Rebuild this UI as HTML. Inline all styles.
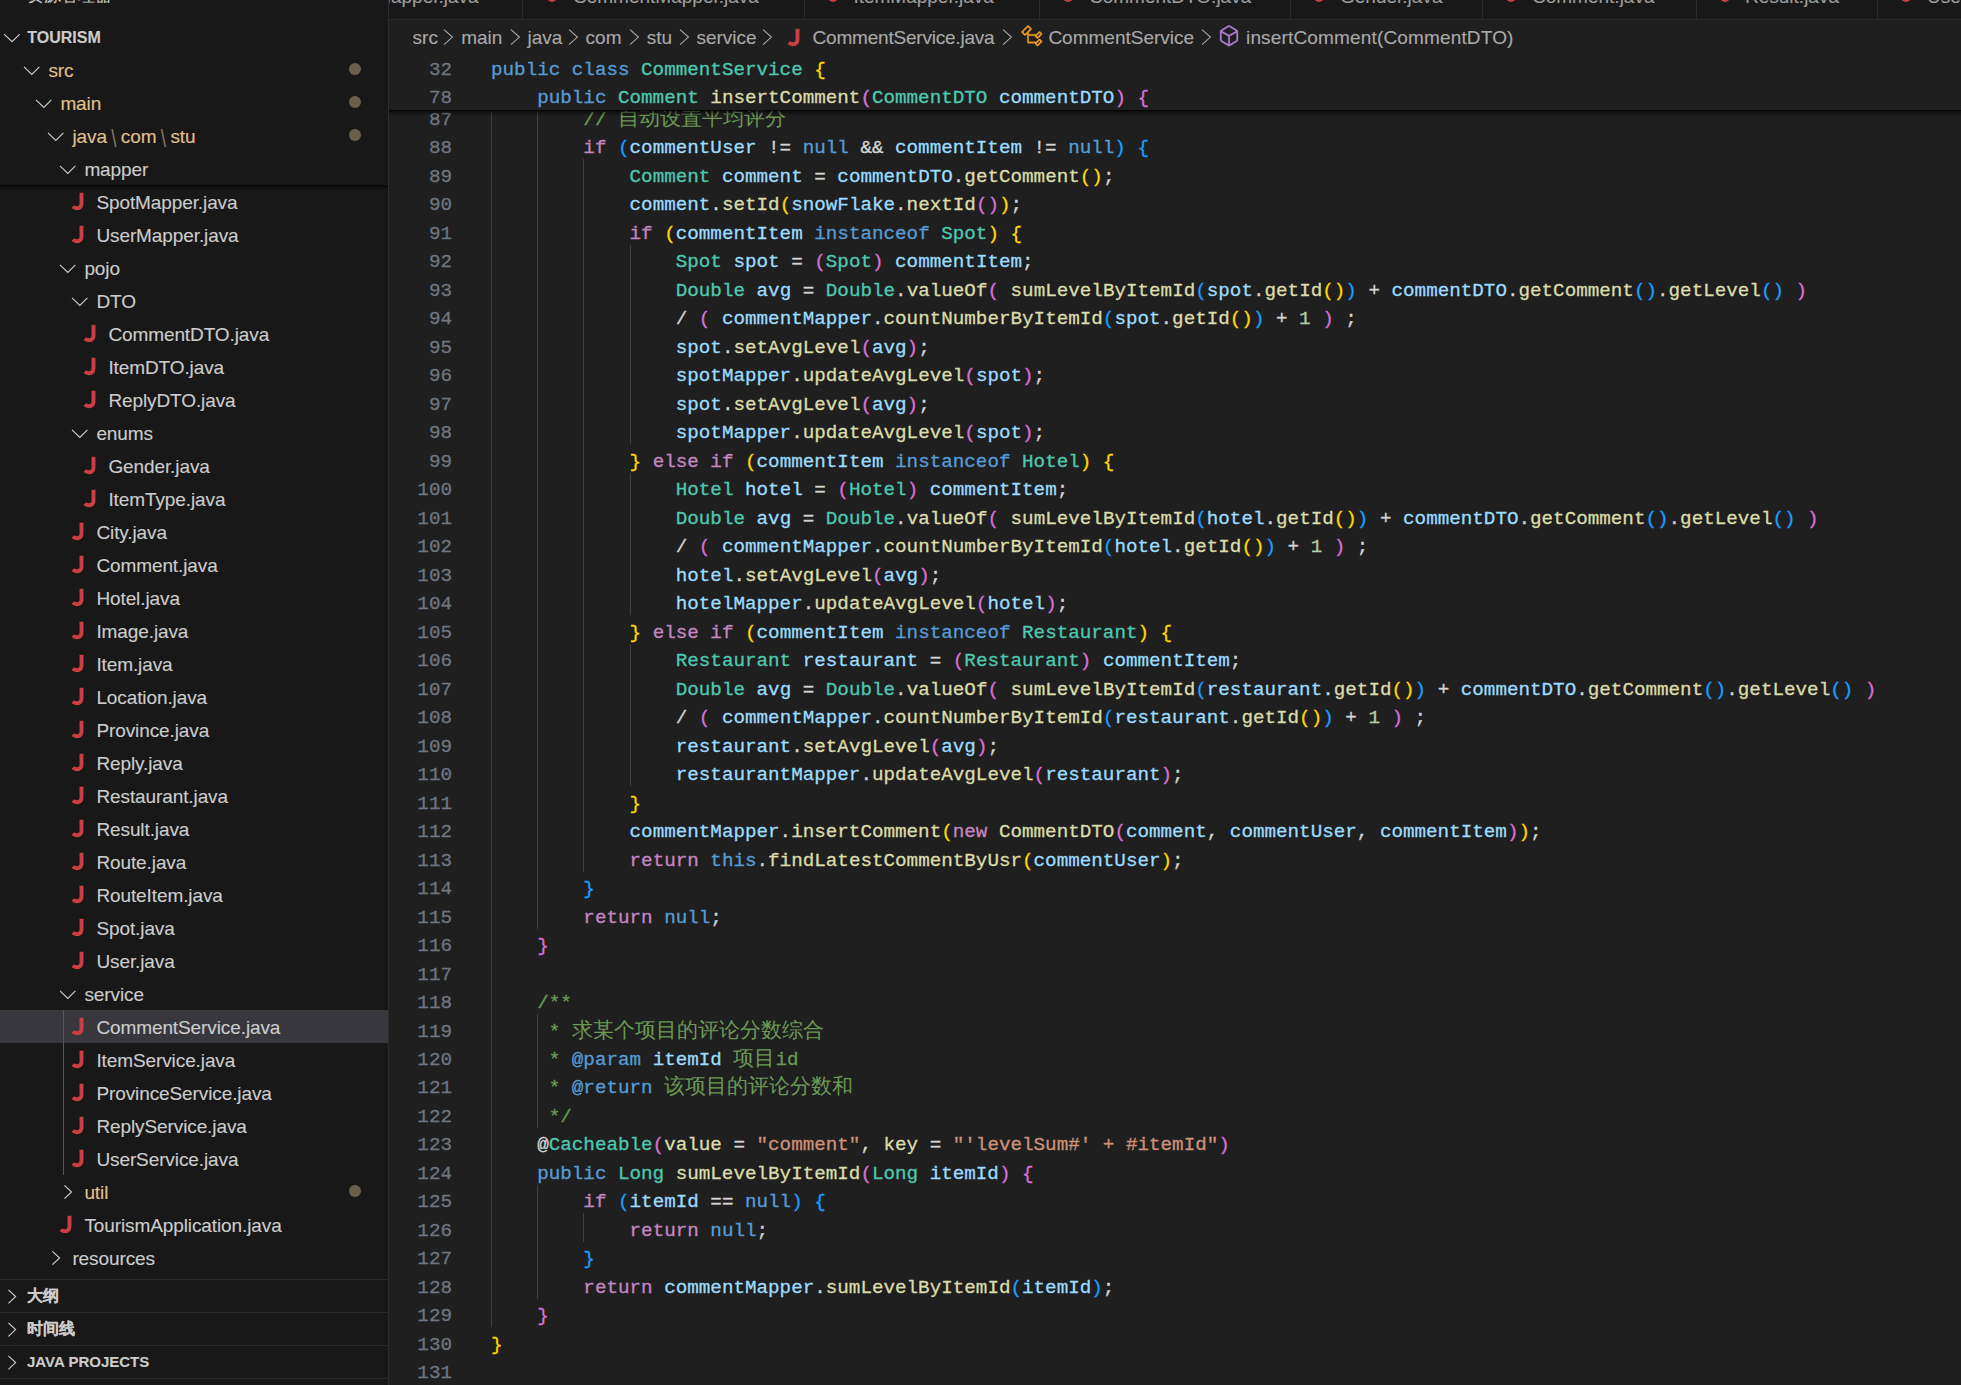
<!DOCTYPE html>
<html><head><meta charset="utf-8">
<style>
*{margin:0;padding:0;box-sizing:border-box}
html,body{width:1961px;height:1385px;overflow:hidden;background:#1f1f1f}
body{position:relative;font-family:"Liberation Sans",sans-serif;-webkit-text-stroke:0.12px currentColor}
#side{position:absolute;left:0;top:0;width:388px;height:1385px;background:#181818;overflow:hidden}
#sideborder{position:absolute;left:388px;top:0;width:1px;height:1385px;background:#2b2b2b}
#editor{position:absolute;left:389px;top:0;width:1572px;height:1385px;background:#1f1f1f;overflow:hidden}
.row{position:absolute;left:0;width:388px;height:33px}
.row.sel{background:#37373d}
.chv{position:absolute;top:0}
.jw{position:absolute;top:7px;width:14px;height:20px}
.ji{display:block}
.lb{position:absolute;top:0;height:33px;line-height:35px;font-size:19px;white-space:nowrap;color:#ccc;letter-spacing:-0.1px}
.bs{color:#857760;padding:0 4.4px;display:inline-block;transform:scaleY(1.3) translateY(1.5px);-webkit-text-stroke:0}
.dot{position:absolute;left:349px;top:10.2px;width:12px;height:12px;border-radius:50%;background:#6a5f4a}
#sidetitle{position:absolute;left:27px;top:-15px;font-size:16.5px;line-height:20px;color:#cccccc;white-space:nowrap}
#tourism{position:absolute;left:0;top:20px;width:388px;height:33px}
#tourism .lb{left:27.3px;font-weight:bold;font-size:16px;color:#ccc;letter-spacing:0}
#stickyside{position:absolute;left:0;top:0;width:388px;height:185px;background:#181818}
#stickyshadow{position:absolute;left:0;top:185px;width:388px;height:6px;background:linear-gradient(rgba(0,0,0,0.75) 0%,rgba(0,0,0,0.3) 35%,rgba(0,0,0,0) 100%)}
.sec{position:absolute;left:0;width:388px;height:33px;border-top:1px solid #2b2b2b;background:#181818}
.sec .lb{left:27px;font-weight:bold;font-size:16px;color:#ccc;height:32px;line-height:32px}
.sguide{position:absolute;left:63px;width:1px;background:#585858}

#tabs{position:absolute;left:0;top:0;width:1572px;height:20px;background:#181818;border-bottom:1px solid #2b2b2b}
.tsep{position:absolute;top:0;width:1px;height:19px;background:#2b2b2b}
.tabt{position:absolute;top:-20.5px;height:33px;line-height:33px;font-size:19px;color:#9d9d9d;white-space:nowrap}
.tabdot{position:absolute;top:-8.4px;width:10px;height:10px;border-radius:50%;background:#CC3E44}
.cj{font-size:20.6px;-webkit-text-stroke:0}
#crumbs{position:absolute;left:0;top:20px;width:1572px;height:33px;font-size:19px;color:#a9a9a9;white-space:nowrap}
.cr{position:absolute;top:0;height:33px;line-height:35px}
.crs{position:absolute;top:0}

.ln{position:absolute;left:0;width:63px;text-align:right;height:28.5px;line-height:28.5px;font-family:"Liberation Mono",monospace;font-size:19.243px;color:#6e7681;margin-top:3.5px}
.cl{position:absolute;height:28.5px;line-height:28.5px;font-family:"Liberation Mono",monospace;font-size:19.243px;color:#d4d4d4;white-space:pre;margin-top:3.5px}
.ig{position:absolute;width:1px;background:#404040}
.cl,.ln{-webkit-text-stroke:0.3px currentColor}
.k{color:#C586C0}.s{color:#569CD6}.t{color:#4EC9B0}.v{color:#9CDCFE}.f{color:#DCDCAA}.c{color:#6A9955}.q{color:#CE9178}.n{color:#B5CEA8}
.c1{color:#FFD700}.c2{color:#DA70D6}.c3{color:#179FFF}
#code{position:absolute;left:0;top:0;width:1572px;height:1385px}
#sticky{position:absolute;left:0;top:52.5px;width:1572px;height:57px;background:#1f1f1f}
#stickyin{position:absolute;left:0;top:-52.5px;width:1572px;height:110px}
#stickysh{position:absolute;left:0;top:109.5px;width:1572px;height:6px;background:linear-gradient(#000 0%,rgba(0,0,0,0.45) 30%,rgba(0,0,0,0) 100%)}
</style></head><body>
<div id="side">
  <div class="row" style="top:185px"><div class="jw" style="left:70.7px"><svg class="ji" width="14" height="20" viewBox="0 0 14 20"><path d="M10.5 0.85 L10.5 11.5 Q10.5 16.2 6 16.2 Q3.5 16.2 1.8 14.6" fill="none" stroke="#CC3E44" stroke-width="3.9" stroke-linecap="butt"/></svg></div><div class="lb" style="left:96.4px;color:#CCCCCC">SpotMapper.java</div></div><div class="row" style="top:218px"><div class="jw" style="left:70.7px"><svg class="ji" width="14" height="20" viewBox="0 0 14 20"><path d="M10.5 0.85 L10.5 11.5 Q10.5 16.2 6 16.2 Q3.5 16.2 1.8 14.6" fill="none" stroke="#CC3E44" stroke-width="3.9" stroke-linecap="butt"/></svg></div><div class="lb" style="left:96.4px;color:#CCCCCC">UserMapper.java</div></div><div class="row" style="top:251px"><svg class="chv" style="left:59.0px" width="18" height="33" viewBox="0 0 18 33"><path d="M1 13.8 L8.8 21.4 L16.4 13.8" fill="none" stroke="#CCCCCC" stroke-width="1.15"/></svg><div class="lb" style="left:84.4px;color:#CCCCCC">pojo</div></div><div class="row" style="top:284px"><svg class="chv" style="left:71.0px" width="18" height="33" viewBox="0 0 18 33"><path d="M1 13.8 L8.8 21.4 L16.4 13.8" fill="none" stroke="#CCCCCC" stroke-width="1.15"/></svg><div class="lb" style="left:96.4px;color:#CCCCCC">DTO</div></div><div class="row" style="top:317px"><div class="jw" style="left:82.7px"><svg class="ji" width="14" height="20" viewBox="0 0 14 20"><path d="M10.5 0.85 L10.5 11.5 Q10.5 16.2 6 16.2 Q3.5 16.2 1.8 14.6" fill="none" stroke="#CC3E44" stroke-width="3.9" stroke-linecap="butt"/></svg></div><div class="lb" style="left:108.4px;color:#CCCCCC">CommentDTO.java</div></div><div class="row" style="top:350px"><div class="jw" style="left:82.7px"><svg class="ji" width="14" height="20" viewBox="0 0 14 20"><path d="M10.5 0.85 L10.5 11.5 Q10.5 16.2 6 16.2 Q3.5 16.2 1.8 14.6" fill="none" stroke="#CC3E44" stroke-width="3.9" stroke-linecap="butt"/></svg></div><div class="lb" style="left:108.4px;color:#CCCCCC">ItemDTO.java</div></div><div class="row" style="top:383px"><div class="jw" style="left:82.7px"><svg class="ji" width="14" height="20" viewBox="0 0 14 20"><path d="M10.5 0.85 L10.5 11.5 Q10.5 16.2 6 16.2 Q3.5 16.2 1.8 14.6" fill="none" stroke="#CC3E44" stroke-width="3.9" stroke-linecap="butt"/></svg></div><div class="lb" style="left:108.4px;color:#CCCCCC">ReplyDTO.java</div></div><div class="row" style="top:416px"><svg class="chv" style="left:71.0px" width="18" height="33" viewBox="0 0 18 33"><path d="M1 13.8 L8.8 21.4 L16.4 13.8" fill="none" stroke="#CCCCCC" stroke-width="1.15"/></svg><div class="lb" style="left:96.4px;color:#CCCCCC">enums</div></div><div class="row" style="top:449px"><div class="jw" style="left:82.7px"><svg class="ji" width="14" height="20" viewBox="0 0 14 20"><path d="M10.5 0.85 L10.5 11.5 Q10.5 16.2 6 16.2 Q3.5 16.2 1.8 14.6" fill="none" stroke="#CC3E44" stroke-width="3.9" stroke-linecap="butt"/></svg></div><div class="lb" style="left:108.4px;color:#CCCCCC">Gender.java</div></div><div class="row" style="top:482px"><div class="jw" style="left:82.7px"><svg class="ji" width="14" height="20" viewBox="0 0 14 20"><path d="M10.5 0.85 L10.5 11.5 Q10.5 16.2 6 16.2 Q3.5 16.2 1.8 14.6" fill="none" stroke="#CC3E44" stroke-width="3.9" stroke-linecap="butt"/></svg></div><div class="lb" style="left:108.4px;color:#CCCCCC">ItemType.java</div></div><div class="row" style="top:515px"><div class="jw" style="left:70.7px"><svg class="ji" width="14" height="20" viewBox="0 0 14 20"><path d="M10.5 0.85 L10.5 11.5 Q10.5 16.2 6 16.2 Q3.5 16.2 1.8 14.6" fill="none" stroke="#CC3E44" stroke-width="3.9" stroke-linecap="butt"/></svg></div><div class="lb" style="left:96.4px;color:#CCCCCC">City.java</div></div><div class="row" style="top:548px"><div class="jw" style="left:70.7px"><svg class="ji" width="14" height="20" viewBox="0 0 14 20"><path d="M10.5 0.85 L10.5 11.5 Q10.5 16.2 6 16.2 Q3.5 16.2 1.8 14.6" fill="none" stroke="#CC3E44" stroke-width="3.9" stroke-linecap="butt"/></svg></div><div class="lb" style="left:96.4px;color:#CCCCCC">Comment.java</div></div><div class="row" style="top:581px"><div class="jw" style="left:70.7px"><svg class="ji" width="14" height="20" viewBox="0 0 14 20"><path d="M10.5 0.85 L10.5 11.5 Q10.5 16.2 6 16.2 Q3.5 16.2 1.8 14.6" fill="none" stroke="#CC3E44" stroke-width="3.9" stroke-linecap="butt"/></svg></div><div class="lb" style="left:96.4px;color:#CCCCCC">Hotel.java</div></div><div class="row" style="top:614px"><div class="jw" style="left:70.7px"><svg class="ji" width="14" height="20" viewBox="0 0 14 20"><path d="M10.5 0.85 L10.5 11.5 Q10.5 16.2 6 16.2 Q3.5 16.2 1.8 14.6" fill="none" stroke="#CC3E44" stroke-width="3.9" stroke-linecap="butt"/></svg></div><div class="lb" style="left:96.4px;color:#CCCCCC">Image.java</div></div><div class="row" style="top:647px"><div class="jw" style="left:70.7px"><svg class="ji" width="14" height="20" viewBox="0 0 14 20"><path d="M10.5 0.85 L10.5 11.5 Q10.5 16.2 6 16.2 Q3.5 16.2 1.8 14.6" fill="none" stroke="#CC3E44" stroke-width="3.9" stroke-linecap="butt"/></svg></div><div class="lb" style="left:96.4px;color:#CCCCCC">Item.java</div></div><div class="row" style="top:680px"><div class="jw" style="left:70.7px"><svg class="ji" width="14" height="20" viewBox="0 0 14 20"><path d="M10.5 0.85 L10.5 11.5 Q10.5 16.2 6 16.2 Q3.5 16.2 1.8 14.6" fill="none" stroke="#CC3E44" stroke-width="3.9" stroke-linecap="butt"/></svg></div><div class="lb" style="left:96.4px;color:#CCCCCC">Location.java</div></div><div class="row" style="top:713px"><div class="jw" style="left:70.7px"><svg class="ji" width="14" height="20" viewBox="0 0 14 20"><path d="M10.5 0.85 L10.5 11.5 Q10.5 16.2 6 16.2 Q3.5 16.2 1.8 14.6" fill="none" stroke="#CC3E44" stroke-width="3.9" stroke-linecap="butt"/></svg></div><div class="lb" style="left:96.4px;color:#CCCCCC">Province.java</div></div><div class="row" style="top:746px"><div class="jw" style="left:70.7px"><svg class="ji" width="14" height="20" viewBox="0 0 14 20"><path d="M10.5 0.85 L10.5 11.5 Q10.5 16.2 6 16.2 Q3.5 16.2 1.8 14.6" fill="none" stroke="#CC3E44" stroke-width="3.9" stroke-linecap="butt"/></svg></div><div class="lb" style="left:96.4px;color:#CCCCCC">Reply.java</div></div><div class="row" style="top:779px"><div class="jw" style="left:70.7px"><svg class="ji" width="14" height="20" viewBox="0 0 14 20"><path d="M10.5 0.85 L10.5 11.5 Q10.5 16.2 6 16.2 Q3.5 16.2 1.8 14.6" fill="none" stroke="#CC3E44" stroke-width="3.9" stroke-linecap="butt"/></svg></div><div class="lb" style="left:96.4px;color:#CCCCCC">Restaurant.java</div></div><div class="row" style="top:812px"><div class="jw" style="left:70.7px"><svg class="ji" width="14" height="20" viewBox="0 0 14 20"><path d="M10.5 0.85 L10.5 11.5 Q10.5 16.2 6 16.2 Q3.5 16.2 1.8 14.6" fill="none" stroke="#CC3E44" stroke-width="3.9" stroke-linecap="butt"/></svg></div><div class="lb" style="left:96.4px;color:#CCCCCC">Result.java</div></div><div class="row" style="top:845px"><div class="jw" style="left:70.7px"><svg class="ji" width="14" height="20" viewBox="0 0 14 20"><path d="M10.5 0.85 L10.5 11.5 Q10.5 16.2 6 16.2 Q3.5 16.2 1.8 14.6" fill="none" stroke="#CC3E44" stroke-width="3.9" stroke-linecap="butt"/></svg></div><div class="lb" style="left:96.4px;color:#CCCCCC">Route.java</div></div><div class="row" style="top:878px"><div class="jw" style="left:70.7px"><svg class="ji" width="14" height="20" viewBox="0 0 14 20"><path d="M10.5 0.85 L10.5 11.5 Q10.5 16.2 6 16.2 Q3.5 16.2 1.8 14.6" fill="none" stroke="#CC3E44" stroke-width="3.9" stroke-linecap="butt"/></svg></div><div class="lb" style="left:96.4px;color:#CCCCCC">RouteItem.java</div></div><div class="row" style="top:911px"><div class="jw" style="left:70.7px"><svg class="ji" width="14" height="20" viewBox="0 0 14 20"><path d="M10.5 0.85 L10.5 11.5 Q10.5 16.2 6 16.2 Q3.5 16.2 1.8 14.6" fill="none" stroke="#CC3E44" stroke-width="3.9" stroke-linecap="butt"/></svg></div><div class="lb" style="left:96.4px;color:#CCCCCC">Spot.java</div></div><div class="row" style="top:944px"><div class="jw" style="left:70.7px"><svg class="ji" width="14" height="20" viewBox="0 0 14 20"><path d="M10.5 0.85 L10.5 11.5 Q10.5 16.2 6 16.2 Q3.5 16.2 1.8 14.6" fill="none" stroke="#CC3E44" stroke-width="3.9" stroke-linecap="butt"/></svg></div><div class="lb" style="left:96.4px;color:#CCCCCC">User.java</div></div><div class="row" style="top:977px"><svg class="chv" style="left:59.0px" width="18" height="33" viewBox="0 0 18 33"><path d="M1 13.8 L8.8 21.4 L16.4 13.8" fill="none" stroke="#CCCCCC" stroke-width="1.15"/></svg><div class="lb" style="left:84.4px;color:#CCCCCC">service</div></div><div class="row sel" style="top:1010px"><div class="jw" style="left:70.7px"><svg class="ji" width="14" height="20" viewBox="0 0 14 20"><path d="M10.5 0.85 L10.5 11.5 Q10.5 16.2 6 16.2 Q3.5 16.2 1.8 14.6" fill="none" stroke="#CC3E44" stroke-width="3.9" stroke-linecap="butt"/></svg></div><div class="lb" style="left:96.4px;color:#CCCCCC">CommentService.java</div></div><div class="row" style="top:1043px"><div class="jw" style="left:70.7px"><svg class="ji" width="14" height="20" viewBox="0 0 14 20"><path d="M10.5 0.85 L10.5 11.5 Q10.5 16.2 6 16.2 Q3.5 16.2 1.8 14.6" fill="none" stroke="#CC3E44" stroke-width="3.9" stroke-linecap="butt"/></svg></div><div class="lb" style="left:96.4px;color:#CCCCCC">ItemService.java</div></div><div class="row" style="top:1076px"><div class="jw" style="left:70.7px"><svg class="ji" width="14" height="20" viewBox="0 0 14 20"><path d="M10.5 0.85 L10.5 11.5 Q10.5 16.2 6 16.2 Q3.5 16.2 1.8 14.6" fill="none" stroke="#CC3E44" stroke-width="3.9" stroke-linecap="butt"/></svg></div><div class="lb" style="left:96.4px;color:#CCCCCC">ProvinceService.java</div></div><div class="row" style="top:1109px"><div class="jw" style="left:70.7px"><svg class="ji" width="14" height="20" viewBox="0 0 14 20"><path d="M10.5 0.85 L10.5 11.5 Q10.5 16.2 6 16.2 Q3.5 16.2 1.8 14.6" fill="none" stroke="#CC3E44" stroke-width="3.9" stroke-linecap="butt"/></svg></div><div class="lb" style="left:96.4px;color:#CCCCCC">ReplyService.java</div></div><div class="row" style="top:1142px"><div class="jw" style="left:70.7px"><svg class="ji" width="14" height="20" viewBox="0 0 14 20"><path d="M10.5 0.85 L10.5 11.5 Q10.5 16.2 6 16.2 Q3.5 16.2 1.8 14.6" fill="none" stroke="#CC3E44" stroke-width="3.9" stroke-linecap="butt"/></svg></div><div class="lb" style="left:96.4px;color:#CCCCCC">UserService.java</div></div><div class="row" style="top:1175px"><svg class="chv" style="left:63.4px" width="14" height="33" viewBox="0 0 14 33"><path d="M1.4 10.3 L8.6 17 L1.4 23.7" fill="none" stroke="#CCCCCC" stroke-width="1.15"/></svg><div class="lb" style="left:84.4px;color:#E2C08D">util</div><div class="dot"></div></div><div class="row" style="top:1208px"><div class="jw" style="left:58.7px"><svg class="ji" width="14" height="20" viewBox="0 0 14 20"><path d="M10.5 0.85 L10.5 11.5 Q10.5 16.2 6 16.2 Q3.5 16.2 1.8 14.6" fill="none" stroke="#CC3E44" stroke-width="3.9" stroke-linecap="butt"/></svg></div><div class="lb" style="left:84.4px;color:#CCCCCC">TourismApplication.java</div></div><div class="row" style="top:1241px"><svg class="chv" style="left:51.4px" width="14" height="33" viewBox="0 0 14 33"><path d="M1.4 10.3 L8.6 17 L1.4 23.7" fill="none" stroke="#CCCCCC" stroke-width="1.15"/></svg><div class="lb" style="left:72.4px;color:#CCCCCC">resources</div></div>
  <div class="sguide" style="top:1010px;height:165px"></div>
  <div id="stickyside">
    <div id="tourism"><svg class="chv" style="left:3px" width="18" height="33" viewBox="0 0 18 33"><path d="M1 14.2 L9.1 21.6 L16.7 14.2" fill="none" stroke="#CCCCCC" stroke-width="1.15"/></svg><div class="lb">TOURISM</div></div>
    <div class="row" style="top:53px"><svg class="chv" style="left:23.0px" width="18" height="33" viewBox="0 0 18 33"><path d="M1 13.8 L8.8 21.4 L16.4 13.8" fill="none" stroke="#CCCCCC" stroke-width="1.15"/></svg><div class="lb" style="left:48.4px;color:#E2C08D">src</div><div class="dot"></div></div><div class="row" style="top:86px"><svg class="chv" style="left:35.0px" width="18" height="33" viewBox="0 0 18 33"><path d="M1 13.8 L8.8 21.4 L16.4 13.8" fill="none" stroke="#CCCCCC" stroke-width="1.15"/></svg><div class="lb" style="left:60.4px;color:#E2C08D">main</div><div class="dot"></div></div><div class="row" style="top:119px"><svg class="chv" style="left:47.0px" width="18" height="33" viewBox="0 0 18 33"><path d="M1 13.8 L8.8 21.4 L16.4 13.8" fill="none" stroke="#CCCCCC" stroke-width="1.15"/></svg><div class="lb" style="left:72.4px;color:#E2C08D">java<span class="bs">\</span>com<span class="bs">\</span>stu</div><div class="dot"></div></div><div class="row" style="top:152px"><svg class="chv" style="left:59.0px" width="18" height="33" viewBox="0 0 18 33"><path d="M1 13.8 L8.8 21.4 L16.4 13.8" fill="none" stroke="#CCCCCC" stroke-width="1.15"/></svg><div class="lb" style="left:84.4px;color:#CCCCCC">mapper</div></div>
  </div>
  <div id="stickyshadow"></div>
  <div id="sidetitle">资源管理器</div>
  <div class="sec" style="top:1279px"><svg class="chv" style="left:7px" width="14" height="33" viewBox="0 0 14 33"><path d="M1.4 9.8 L8.6 16.6 L1.4 23.4" fill="none" stroke="#CCCCCC" stroke-width="1.15"/></svg><div class="lb">大纲</div></div>
  <div class="sec" style="top:1312px"><svg class="chv" style="left:7px" width="14" height="33" viewBox="0 0 14 33"><path d="M1.4 9.8 L8.6 16.6 L1.4 23.4" fill="none" stroke="#CCCCCC" stroke-width="1.15"/></svg><div class="lb">时间线</div></div>
  <div class="sec" style="top:1345px"><svg class="chv" style="left:7px" width="14" height="33" viewBox="0 0 14 33"><path d="M1.4 9.8 L8.6 16.6 L1.4 23.4" fill="none" stroke="#CCCCCC" stroke-width="1.15"/></svg><div class="lb" style="font-size:15px;letter-spacing:0">JAVA PROJECTS</div></div>
  <div class="sec" style="top:1378px"></div>
</div>
<div id="sideborder"></div>
<div id="editor">
  <div id="code">
    <div class="ig" style="left:102px;top:102.50px;height:1224.86px"></div><div class="ig" style="left:148px;top:102.50px;height:826.06px"></div><div class="ig" style="left:148px;top:1014.02px;height:113.94px"></div><div class="ig" style="left:148px;top:1184.93px;height:113.94px"></div><div class="ig" style="left:194px;top:159.47px;height:712.12px"></div><div class="ig" style="left:194px;top:1213.41px;height:28.49px"></div><div class="ig" style="left:241px;top:244.93px;height:199.39px"></div><div class="ig" style="left:241px;top:472.81px;height:142.43px"></div><div class="ig" style="left:241px;top:643.72px;height:142.42px"></div>
    <div class="ln" style="top:102.50px">87</div><div class="cl" style="top:102.50px;left:194.368px"><span class="c">// <span class="cj">自动设置平均评分</span></span></div><div class="ln" style="top:130.99px">88</div><div class="cl" style="top:130.99px;left:194.368px"><span class="k">if</span> <span class="c3">(</span><span class="v">commentUser</span> != <span class="s">null</span> &amp;&amp; <span class="v">commentItem</span> != <span class="s">null</span><span class="c3">)</span> <span class="c3">{</span></div><div class="ln" style="top:159.47px">89</div><div class="cl" style="top:159.47px;left:240.552px"><span class="t">Comment</span> <span class="v">comment</span> = <span class="v">commentDTO</span>.<span class="f">getComment</span><span class="c1">()</span>;</div><div class="ln" style="top:187.95px">90</div><div class="cl" style="top:187.95px;left:240.552px"><span class="v">comment</span>.<span class="f">setId</span><span class="c1">(</span><span class="v">snowFlake</span>.<span class="f">nextId</span><span class="c2">()</span><span class="c1">)</span>;</div><div class="ln" style="top:216.44px">91</div><div class="cl" style="top:216.44px;left:240.552px"><span class="k">if</span> <span class="c1">(</span><span class="v">commentItem</span> <span class="s">instanceof</span> <span class="t">Spot</span><span class="c1">)</span> <span class="c1">{</span></div><div class="ln" style="top:244.93px">92</div><div class="cl" style="top:244.93px;left:286.736px"><span class="t">Spot</span> <span class="v">spot</span> = <span class="c2">(</span><span class="t">Spot</span><span class="c2">)</span> <span class="v">commentItem</span>;</div><div class="ln" style="top:273.41px">93</div><div class="cl" style="top:273.41px;left:286.736px"><span class="t">Double</span> <span class="v">avg</span> = <span class="t">Double</span>.<span class="f">valueOf</span><span class="c2">(</span> <span class="f">sumLevelByItemId</span><span class="c3">(</span><span class="v">spot</span>.<span class="f">getId</span><span class="c1">()</span><span class="c3">)</span> + <span class="v">commentDTO</span>.<span class="f">getComment</span><span class="c3">()</span>.<span class="f">getLevel</span><span class="c3">()</span> <span class="c2">)</span></div><div class="ln" style="top:301.89px">94</div><div class="cl" style="top:301.89px;left:286.736px">/ <span class="c2">(</span> <span class="v">commentMapper</span>.<span class="f">countNumberByItemId</span><span class="c3">(</span><span class="v">spot</span>.<span class="f">getId</span><span class="c1">()</span><span class="c3">)</span> + <span class="n">1</span> <span class="c2">)</span> ;</div><div class="ln" style="top:330.38px">95</div><div class="cl" style="top:330.38px;left:286.736px"><span class="v">spot</span>.<span class="f">setAvgLevel</span><span class="c2">(</span><span class="v">avg</span><span class="c2">)</span>;</div><div class="ln" style="top:358.87px">96</div><div class="cl" style="top:358.87px;left:286.736px"><span class="v">spotMapper</span>.<span class="f">updateAvgLevel</span><span class="c2">(</span><span class="v">spot</span><span class="c2">)</span>;</div><div class="ln" style="top:387.35px">97</div><div class="cl" style="top:387.35px;left:286.736px"><span class="v">spot</span>.<span class="f">setAvgLevel</span><span class="c2">(</span><span class="v">avg</span><span class="c2">)</span>;</div><div class="ln" style="top:415.83px">98</div><div class="cl" style="top:415.83px;left:286.736px"><span class="v">spotMapper</span>.<span class="f">updateAvgLevel</span><span class="c2">(</span><span class="v">spot</span><span class="c2">)</span>;</div><div class="ln" style="top:444.32px">99</div><div class="cl" style="top:444.32px;left:240.552px"><span class="c1">}</span> <span class="k">else</span> <span class="k">if</span> <span class="c1">(</span><span class="v">commentItem</span> <span class="s">instanceof</span> <span class="t">Hotel</span><span class="c1">)</span> <span class="c1">{</span></div><div class="ln" style="top:472.81px">100</div><div class="cl" style="top:472.81px;left:286.736px"><span class="t">Hotel</span> <span class="v">hotel</span> = <span class="c2">(</span><span class="t">Hotel</span><span class="c2">)</span> <span class="v">commentItem</span>;</div><div class="ln" style="top:501.29px">101</div><div class="cl" style="top:501.29px;left:286.736px"><span class="t">Double</span> <span class="v">avg</span> = <span class="t">Double</span>.<span class="f">valueOf</span><span class="c2">(</span> <span class="f">sumLevelByItemId</span><span class="c3">(</span><span class="v">hotel</span>.<span class="f">getId</span><span class="c1">()</span><span class="c3">)</span> + <span class="v">commentDTO</span>.<span class="f">getComment</span><span class="c3">()</span>.<span class="f">getLevel</span><span class="c3">()</span> <span class="c2">)</span></div><div class="ln" style="top:529.77px">102</div><div class="cl" style="top:529.77px;left:286.736px">/ <span class="c2">(</span> <span class="v">commentMapper</span>.<span class="f">countNumberByItemId</span><span class="c3">(</span><span class="v">hotel</span>.<span class="f">getId</span><span class="c1">()</span><span class="c3">)</span> + <span class="n">1</span> <span class="c2">)</span> ;</div><div class="ln" style="top:558.26px">103</div><div class="cl" style="top:558.26px;left:286.736px"><span class="v">hotel</span>.<span class="f">setAvgLevel</span><span class="c2">(</span><span class="v">avg</span><span class="c2">)</span>;</div><div class="ln" style="top:586.75px">104</div><div class="cl" style="top:586.75px;left:286.736px"><span class="v">hotelMapper</span>.<span class="f">updateAvgLevel</span><span class="c2">(</span><span class="v">hotel</span><span class="c2">)</span>;</div><div class="ln" style="top:615.23px">105</div><div class="cl" style="top:615.23px;left:240.552px"><span class="c1">}</span> <span class="k">else</span> <span class="k">if</span> <span class="c1">(</span><span class="v">commentItem</span> <span class="s">instanceof</span> <span class="t">Restaurant</span><span class="c1">)</span> <span class="c1">{</span></div><div class="ln" style="top:643.72px">106</div><div class="cl" style="top:643.72px;left:286.736px"><span class="t">Restaurant</span> <span class="v">restaurant</span> = <span class="c2">(</span><span class="t">Restaurant</span><span class="c2">)</span> <span class="v">commentItem</span>;</div><div class="ln" style="top:672.20px">107</div><div class="cl" style="top:672.20px;left:286.736px"><span class="t">Double</span> <span class="v">avg</span> = <span class="t">Double</span>.<span class="f">valueOf</span><span class="c2">(</span> <span class="f">sumLevelByItemId</span><span class="c3">(</span><span class="v">restaurant</span>.<span class="f">getId</span><span class="c1">()</span><span class="c3">)</span> + <span class="v">commentDTO</span>.<span class="f">getComment</span><span class="c3">()</span>.<span class="f">getLevel</span><span class="c3">()</span> <span class="c2">)</span></div><div class="ln" style="top:700.68px">108</div><div class="cl" style="top:700.68px;left:286.736px">/ <span class="c2">(</span> <span class="v">commentMapper</span>.<span class="f">countNumberByItemId</span><span class="c3">(</span><span class="v">restaurant</span>.<span class="f">getId</span><span class="c1">()</span><span class="c3">)</span> + <span class="n">1</span> <span class="c2">)</span> ;</div><div class="ln" style="top:729.17px">109</div><div class="cl" style="top:729.17px;left:286.736px"><span class="v">restaurant</span>.<span class="f">setAvgLevel</span><span class="c2">(</span><span class="v">avg</span><span class="c2">)</span>;</div><div class="ln" style="top:757.65px">110</div><div class="cl" style="top:757.65px;left:286.736px"><span class="v">restaurantMapper</span>.<span class="f">updateAvgLevel</span><span class="c2">(</span><span class="v">restaurant</span><span class="c2">)</span>;</div><div class="ln" style="top:786.14px">111</div><div class="cl" style="top:786.14px;left:240.552px"><span class="c1">}</span></div><div class="ln" style="top:814.62px">112</div><div class="cl" style="top:814.62px;left:240.552px"><span class="v">commentMapper</span>.<span class="f">insertComment</span><span class="c1">(</span><span class="k">new</span> <span class="f">CommentDTO</span><span class="c2">(</span><span class="v">comment</span>, <span class="v">commentUser</span>, <span class="v">commentItem</span><span class="c2">)</span><span class="c1">)</span>;</div><div class="ln" style="top:843.11px">113</div><div class="cl" style="top:843.11px;left:240.552px"><span class="k">return</span> <span class="s">this</span>.<span class="f">findLatestCommentByUsr</span><span class="c1">(</span><span class="v">commentUser</span><span class="c1">)</span>;</div><div class="ln" style="top:871.60px">114</div><div class="cl" style="top:871.60px;left:194.368px"><span class="c3">}</span></div><div class="ln" style="top:900.08px">115</div><div class="cl" style="top:900.08px;left:194.368px"><span class="k">return</span> <span class="s">null</span>;</div><div class="ln" style="top:928.56px">116</div><div class="cl" style="top:928.56px;left:148.184px"><span class="c2">}</span></div><div class="ln" style="top:957.05px">117</div><div class="ln" style="top:985.53px">118</div><div class="cl" style="top:985.53px;left:148.184px"><span class="c">/**</span></div><div class="ln" style="top:1014.02px">119</div><div class="cl" style="top:1014.02px;left:148.184px"><span class="c"> * <span class="cj">求某个项目的评论分数综合</span></span></div><div class="ln" style="top:1042.51px">120</div><div class="cl" style="top:1042.51px;left:148.184px"><span class="c"> * </span><span class="s">@param</span> <span class="v">itemId</span><span class="c"> <span class="cj">项目</span>id</span></div><div class="ln" style="top:1070.99px">121</div><div class="cl" style="top:1070.99px;left:148.184px"><span class="c"> * </span><span class="s">@return</span><span class="c"> <span class="cj">该项目的评论分数和</span></span></div><div class="ln" style="top:1099.47px">122</div><div class="cl" style="top:1099.47px;left:148.184px"><span class="c"> */</span></div><div class="ln" style="top:1127.96px">123</div><div class="cl" style="top:1127.96px;left:148.184px">@<span class="t">Cacheable</span><span class="c2">(</span><span class="f">value</span> = <span class="q">&quot;comment&quot;</span>, <span class="f">key</span> = <span class="q">&quot;&#x27;levelSum#&#x27; + #itemId&quot;</span><span class="c2">)</span></div><div class="ln" style="top:1156.44px">124</div><div class="cl" style="top:1156.44px;left:148.184px"><span class="s">public</span> <span class="t">Long</span> <span class="f">sumLevelByItemId</span><span class="c2">(</span><span class="t">Long</span> <span class="v">itemId</span><span class="c2">)</span> <span class="c2">{</span></div><div class="ln" style="top:1184.93px">125</div><div class="cl" style="top:1184.93px;left:194.368px"><span class="k">if</span> <span class="c3">(</span><span class="v">itemId</span> == <span class="s">null</span><span class="c3">)</span> <span class="c3">{</span></div><div class="ln" style="top:1213.41px">126</div><div class="cl" style="top:1213.41px;left:240.552px"><span class="k">return</span> <span class="s">null</span>;</div><div class="ln" style="top:1241.90px">127</div><div class="cl" style="top:1241.90px;left:194.368px"><span class="c3">}</span></div><div class="ln" style="top:1270.38px">128</div><div class="cl" style="top:1270.38px;left:194.368px"><span class="k">return</span> <span class="v">commentMapper</span>.<span class="f">sumLevelByItemId</span><span class="c3">(</span><span class="v">itemId</span><span class="c3">)</span>;</div><div class="ln" style="top:1298.87px">129</div><div class="cl" style="top:1298.87px;left:148.184px"><span class="c2">}</span></div><div class="ln" style="top:1327.36px">130</div><div class="cl" style="top:1327.36px;left:102.000px"><span class="c1">}</span></div><div class="ln" style="top:1355.84px">131</div>
  </div>
  <div id="sticky"><div id="stickyin"><div class="ln" style="top:52.50px">32</div><div class="cl" style="top:52.50px;left:102.000px"><span class="s">public</span> <span class="s">class</span> <span class="t">CommentService</span> <span class="c1">{</span></div><div class="ln" style="top:80.98px">78</div><div class="cl" style="top:80.98px;left:148.184px"><span class="s">public</span> <span class="t">Comment</span> <span class="f">insertComment</span><span class="c2">(</span><span class="t">CommentDTO</span> <span class="v">commentDTO</span><span class="c2">)</span> <span class="c2">{</span></div></div></div>
  <div id="stickysh"></div>
  <div id="tabs"><div class="tsep" style="left:132.5px"></div><div class="tsep" style="left:414.6px"></div><div class="tsep" style="left:649.6px"></div><div class="tsep" style="left:900.5px"></div><div class="tsep" style="left:1092.9px"></div><div class="tsep" style="left:1306.5px"></div><div class="tsep" style="left:1487.6px"></div><div class="tabt" style="right:1482.4px">SpotMapper.java</div><div class="tabdot" style="left:158.0px"></div><div class="tabt" style="left:184.0px">CommentMapper.java</div><div class="tabdot" style="left:438.6px"></div><div class="tabt" style="left:464.4px">ItemMapper.java</div><div class="tabdot" style="left:673.6px"></div><div class="tabt" style="left:700.0px">CommentDTO.java</div><div class="tabdot" style="left:924.6px"></div><div class="tabt" style="left:951.0px">Gender.java</div><div class="tabdot" style="left:1117.0px"></div><div class="tabt" style="left:1143.0px">Comment.java</div><div class="tabdot" style="left:1331.0px"></div><div class="tabt" style="left:1356.0px">Result.java</div><div class="tabdot" style="left:1511.7px"></div><div class="tabt" style="left:1538.0px">User.java</div></div>
  <div id="crumbs"><div class="cr" style="left:23.6px;letter-spacing:0.00px">src</div><svg class="crs" style="left:54.3px" width="11" height="33" viewBox="0 0 11 33"><path d="M1 9.6 L9.4 17.1 L1 24.6" fill="none" stroke="#a9a9a9" stroke-width="1.1"/></svg><div class="cr" style="left:72.2px;letter-spacing:0.00px">main</div><svg class="crs" style="left:120.8px" width="11" height="33" viewBox="0 0 11 33"><path d="M1 9.6 L9.4 17.1 L1 24.6" fill="none" stroke="#a9a9a9" stroke-width="1.1"/></svg><div class="cr" style="left:138.5px;letter-spacing:0.00px">java</div><svg class="crs" style="left:178.8px" width="11" height="33" viewBox="0 0 11 33"><path d="M1 9.6 L9.4 17.1 L1 24.6" fill="none" stroke="#a9a9a9" stroke-width="1.1"/></svg><div class="cr" style="left:196.6px;letter-spacing:0.00px">com</div><svg class="crs" style="left:240.3px" width="11" height="33" viewBox="0 0 11 33"><path d="M1 9.6 L9.4 17.1 L1 24.6" fill="none" stroke="#a9a9a9" stroke-width="1.1"/></svg><div class="cr" style="left:257.8px;letter-spacing:0.00px">stu</div><svg class="crs" style="left:289.8px" width="11" height="33" viewBox="0 0 11 33"><path d="M1 9.6 L9.4 17.1 L1 24.6" fill="none" stroke="#a9a9a9" stroke-width="1.1"/></svg><div class="cr" style="left:307.4px;letter-spacing:0.00px">service</div><svg class="crs" style="left:373.3px" width="11" height="33" viewBox="0 0 11 33"><path d="M1 9.6 L9.4 17.1 L1 24.6" fill="none" stroke="#a9a9a9" stroke-width="1.1"/></svg><div class="jw" style="left:397.5px;top:8px"><svg class="ji" width="14" height="20" viewBox="0 0 14 20"><path d="M10.5 0.85 L10.5 11.5 Q10.5 16.2 6 16.2 Q3.5 16.2 1.8 14.6" fill="none" stroke="#CC3E44" stroke-width="3.9" stroke-linecap="butt"/></svg></div><div class="cr" style="left:423.6px;letter-spacing:-0.21px">CommentService.java</div><svg class="crs" style="left:613.4px" width="11" height="33" viewBox="0 0 11 33"><path d="M1 9.6 L9.4 17.1 L1 24.6" fill="none" stroke="#a9a9a9" stroke-width="1.1"/></svg><svg class="crs" style="left:630.5px;top:3.9px" width="24" height="24" viewBox="0 0 16 16"><path fill="#EE9D28" stroke="#EE9D28" stroke-width="0.2" d="M11.34 9.71h.71l2.67-2.67v-.71L13.38 5h-.7l-1.82 1.81h-5V5.56l1.86-1.85V3l-2-2H5L1 5v.71l2 2h.71l1.14-1.15v5.79l.5.5H10v.52l1.33 1.34h.71l2.67-2.67v-.71L13.37 10h-.7l-1.86 1.85h-5v-4H10v.48l1.34 1.38zm1.69-3.65l.63.63-2 2-.63-.63 2-2zm0 5l.63.63-2 2-.63-.63 2-2zM3.35 6.65L2.06 5.37 5.37 2.06l1.29 1.29-3.31 3.3z"/></svg><div class="cr" style="left:659.4px;letter-spacing:0.00px">CommentService</div><svg class="crs" style="left:811.6px" width="11" height="33" viewBox="0 0 11 33"><path d="M1 9.6 L9.4 17.1 L1 24.6" fill="none" stroke="#a9a9a9" stroke-width="1.1"/></svg><svg class="crs" style="left:828.0px;top:3.5px" width="24" height="24" viewBox="0 0 16 16"><path fill="#B180D7" stroke="#B180D7" stroke-width="0.2" d="M13.51 4l-5-3h-1l-5 3-.49.86v6l.49.85 5 3h1l5-3 .49-.85v-6L13.51 4zm-6 9.56l-4.5-2.7V5.7l4.5 2.45v5.41zM3.27 4.7l4.74-2.84 4.74 2.84-4.74 2.59L3.27 4.7zm9.74 6.16l-4.5 2.7V8.15l4.5-2.45v5.16z"/></svg><div class="cr" style="left:857.0px;letter-spacing:0.16px">insertComment(CommentDTO)</div></div>
</div>
</body></html>
